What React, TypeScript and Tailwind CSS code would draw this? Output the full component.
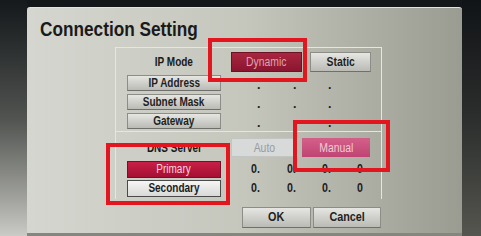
const sans = { fontFamily: '"Liberation Sans", Arial, sans-serif' };

const grayBtn =
  "flex items-center justify-center border border-[#8c8d87] border-b-[#6f706b] bg-gradient-to-b from-[#e6e6e2] to-[#babbb5] text-[#1f1f1f] font-bold";

// the tv uses a condensed face, squeeze liberation sans to match
const N = ({ children }: { children: React.ReactNode }) => (
  <span className="inline-block whitespace-nowrap scale-x-[0.8]">{children}</span>
);

const Dots = ({ zeros }: { zeros?: string[] }) => (
  <div className="grid grid-cols-[36px_35px_35px_30px] pl-[20px] text-[12.5px] font-bold text-[#1c1c1c]">
    {zeros
      ? zeros.map((z, i) => (
          <span key={i} className="inline-block origin-left scale-x-[0.85]">
            {z}
          </span>
        ))
      : [0, 1, 2].map((i) => (
          <span key={i} className="pl-[6px]">
            .
          </span>
        ))}
  </div>
);

export default function App() {
  return (
    <div className="flex w-[481px] h-[236px] overflow-hidden bg-[#121518]" style={sans}>
      {/* left edge of the tv */}
      <div className="w-[27px] h-full bg-gradient-to-b from-[#15191c] via-[#50534f] to-[#cacac6]" />

      <div className="flex flex-col w-[435px] h-full">
        <div className="h-[7px] bg-[#14171a]" />

        {/* panel */}
        <div className="relative flex flex-col h-[226px] rounded-t-[3px] border-t border-[#e2e3da] bg-gradient-to-r from-[#d5d6cf] via-[#c5c6bc] to-[#9b9c91]">
          <h1 className="mt-[8px] ml-[13px] h-[25px] text-[21px] leading-[25px] font-bold text-[#1a1a1a]">
            <span className="inline-block whitespace-nowrap origin-left scale-x-[0.82]">Connection Setting</span>
          </h1>

          {/* settings box */}
          <div className="mt-[6px] ml-[88px] w-[267px] flex flex-col border border-[#e6e6df] border-b-0">
            <div className="flex flex-col gap-[3px] pt-[4px] pl-[11px] h-[84px] border-b border-[#e6e6df]">
              <div className="flex items-center h-[20px]">
                <div className="w-[94px] text-center text-[12.5px] font-bold text-[#1a1a1a]">
                  <N>IP Mode</N>
                </div>
                <div className="flex gap-[8px] ml-[10px]">
                  <div className="flex items-center justify-center w-[71px] h-[20px] border border-[#6d1224] bg-gradient-to-b from-[#a9263f] to-[#8a1530] text-[13px] text-[#d9a4ae]">
                    <N>Dynamic</N>
                  </div>
                  <div className={`${grayBtn} w-[61px] h-[20px] text-[13px]`}>
                    <N>Static</N>
                  </div>
                </div>
              </div>
              {["IP Address", "Subnet Mask", "Gateway"].map((l) => (
                <div key={l} className="flex items-center h-[16px]">
                  <div className={`${grayBtn} w-[94px] h-[16px] text-[12.5px]`}>
                    <N>{l}</N>
                  </div>
                  <div className="ml-[10px] w-[139px] pt-[4px]">
                    <Dots />
                  </div>
                </div>
              ))}
            </div>

            <div className="flex flex-col pt-[6px] pl-[11px] h-[67px]">
              <div className="flex items-center h-[19px]">
                <div className="w-[94px] pt-[2px] text-center text-[12.5px] font-bold text-[#1a1a1a]">
                  <N>DNS Server</N>
                </div>
                <div className="flex gap-[4px] ml-[10px]">
                  <div className="flex items-center justify-center w-[67px] h-[19px] border border-[#c3c5c5] bg-[#d8dada] text-[13px] text-[#979b9d]">
                    <N>Auto</N>
                  </div>
                  <div className="flex items-center justify-center w-[68px] h-[19px] bg-gradient-to-b from-[#d4608a] to-[#bf4473] text-[13px] text-[#f3c8d6]">
                    <N>Manual</N>
                  </div>
                </div>
              </div>
              <div className="flex items-center h-[17px] mt-[4px]">
                <div className="flex items-center justify-center w-[94px] h-[17px] border border-[#7c0d25] bg-gradient-to-b from-[#c81f47] to-[#a50f34] text-[12.5px] text-[#f6d6dd]">
                  <N>Primary</N>
                </div>
                <div className="ml-[10px] w-[139px]">
                  <Dots zeros={["0.", "0.", "0.", "0"]} />
                </div>
              </div>
              <div className="flex items-center h-[17px] mt-[2px]">
                <div className="flex items-center justify-center w-[94px] h-[17px] border border-[#4a4a4a] bg-gradient-to-b from-[#f6f6f5] to-[#d9d9d7] text-[12.5px] font-bold text-[#1c1c1c]">
                  <N>Secondary</N>
                </div>
                <div className="ml-[10px] w-[139px]">
                  <Dots zeros={["0.", "0.", "0.", "0"]} />
                </div>
              </div>
            </div>
          </div>

          {/* ok / cancel */}
          <div className="flex gap-[2px] mt-[8px] ml-[215px]">
            <div className={`${grayBtn} w-[69px] h-[21px] text-[13.5px]`}>
              <N>OK</N>
            </div>
            <div className={`${grayBtn} w-[68px] h-[21px] text-[13.5px]`}>
              <N>Cancel</N>
            </div>
          </div>

          {/* red annotation boxes drawn over the screen */}
          <div className="absolute left-[181px] top-[30px] w-[99px] h-[44px] border-[4px] border-[#e3161f]" />
          <div className="absolute left-[79px] top-[135px] w-[124px] h-[62px] border-[4px] border-[#e3161f]" />
          <div className="absolute left-[266px] top-[112px] w-[97px] h-[52px] border-[4px] border-[#e3161f]" />
        </div>

        <div className="flex-1 bg-[#85867f]" />
      </div>

      {/* right edge */}
      <div className="flex-1 h-full bg-gradient-to-b from-[#111416] via-[#2c2e2d] to-[#55564f]" />
    </div>
  );
}
